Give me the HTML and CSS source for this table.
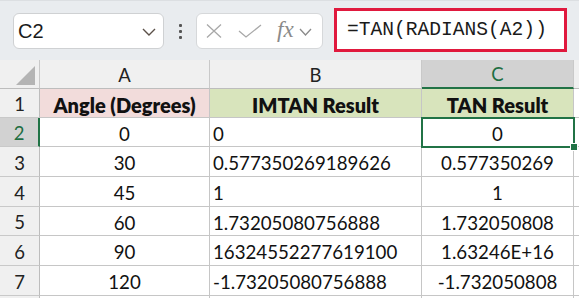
FILE: index.html
```html
<!DOCTYPE html>
<html>
<head>
<meta charset="utf-8">
<link rel="stylesheet" href="styles.css">
</head>
<body>
<div class="app">
  <div class="topbar">
    <div class="namebox">
      <span class="name">C2</span>
      <svg class="chev" width="14" height="8" viewBox="0 0 14 8"><path d="M1 1 L7 7 L13 1" fill="none" stroke="#5b5048" stroke-width="1.4"/></svg>
    </div>
    <div class="dots"><span></span><span></span><span></span></div>
    <div class="fxbox">
      <svg class="ico-x" width="18" height="14" viewBox="0 0 18 14"><path d="M2 0.5 L16 13.5 M16 0.5 L2 13.5" stroke="#a8a8a8" stroke-width="1.3" fill="none"/></svg>
      <svg class="ico-check" width="24" height="14" viewBox="0 0 24 14"><path d="M1 7 L8 13 L23 1" stroke="#a8a8a8" stroke-width="1.3" fill="none"/></svg>
      <span class="fx">fx</span>
      <svg class="chev2" width="13" height="8" viewBox="0 0 13 8"><path d="M1 1 L6.5 7 L12 1" fill="none" stroke="#8a8a8a" stroke-width="1.3"/></svg>
    </div>
    <div class="formula">=TAN(RADIANS(A2))</div>
  </div>
  <div class="sheet">
    <div class="corner"><span class="tri"></span></div>
    <div class="colhead">A</div>
    <div class="colhead">B</div>
    <div class="colhead sel">C</div>
    <div class="colhead rest"></div>

    <div class="rowhead">1</div>
    <div class="cell hdr pink">Angle (Degrees)</div>
    <div class="cell hdr green">IMTAN Result</div>
    <div class="cell hdr green">TAN Result</div>
    <div class="cell rest"></div>

    <div class="rowhead sel">2</div>
    <div class="cell c">0</div>
    <div class="cell l">0</div>
    <div class="cell c active">0<span class="handle"></span></div>
    <div class="cell rest"></div>

    <div class="rowhead">3</div>
    <div class="cell c">30</div>
    <div class="cell l">0.577350269189626</div>
    <div class="cell c">0.577350269</div>
    <div class="cell rest"></div>

    <div class="rowhead">4</div>
    <div class="cell c">45</div>
    <div class="cell l">1</div>
    <div class="cell c">1</div>
    <div class="cell rest"></div>

    <div class="rowhead">5</div>
    <div class="cell c">60</div>
    <div class="cell l">1.73205080756888</div>
    <div class="cell c">1.732050808</div>
    <div class="cell rest"></div>

    <div class="rowhead">6</div>
    <div class="cell c">90</div>
    <div class="cell l">16324552277619100</div>
    <div class="cell c">1.63246E+16</div>
    <div class="cell rest"></div>

    <div class="rowhead">7</div>
    <div class="cell c">120</div>
    <div class="cell l">-1.73205080756888</div>
    <div class="cell c">-1.732050808</div>
    <div class="cell rest"></div>

    <div class="rowhead"></div>
    <div class="cell"></div>
    <div class="cell"></div>
    <div class="cell"></div>
    <div class="cell rest"></div>
  </div>
</div>
</body>
</html>
```
FILE: styles.css
```css
* { box-sizing: border-box; }
html, body { margin: 0; padding: 0; }
body {
  width: 579px;
  height: 298px;
  overflow: hidden;
  background: #ffffff;
  font-family: Lato, "Liberation Sans", sans-serif;
  color: #000;
}
.app { width: 579px; }

.topbar {
  height: 60px;
  background: #e9ecef;
  display: flex;
  align-items: flex-start;
  padding: 7px 0 0 13px;
  border-top: 1px solid #dcdfe2;
}
.namebox {
  margin-top: 5px;
  width: 151px;
  height: 36px;
  background: #fff;
  border: 1px solid #cfd1d3;
  border-radius: 6px;
  display: flex;
  align-items: center;
  justify-content: space-between;
  padding: 0 7px 0 4px;
}
.name {
  font-family: "Liberation Sans", Arial, sans-serif;
  font-size: 20px;
  color: #1a1a1a;
}
.chev { margin-top: 1px; }
.dots {
  width: 32px;
  height: 36px;
  margin-top: 5px;
  display: flex;
  flex-direction: column;
  align-items: center;
  justify-content: center;
  gap: 3px;
}
.dots span {
  width: 3px;
  height: 3px;
  background: #555;
  border-radius: 1px;
}
.fxbox {
  margin-top: 5px;
  width: 127px;
  height: 36px;
  background: #fff;
  border: 1px solid #d6d8da;
  border-radius: 6px;
  display: flex;
  align-items: center;
  padding: 0 0 0 8px;
}
.ico-x { margin-left: 0; }
.ico-check { margin-left: 15px; }
.fx {
  margin-left: 15px;
  font-family: "Liberation Serif", "DejaVu Serif", serif;
  font-style: italic;
  font-size: 23px;
  color: #8a8a8a;
  line-height: 1;
  margin-top: -3px;
}
.chev2 { margin-left: 5px; margin-top: 2px; }
.formula {
  margin-left: 11px;
  width: 233px;
  height: 44px;
  background: #fff;
  border: 3px solid #e0193e;
  font-family: "Liberation Mono", "DejaVu Sans Mono", monospace;
  font-size: 19.6px;
  color: #1a1a1a;
  padding: 0 0 0 10px;
  display: flex;
  align-items: center;
}

.sheet {
  display: grid;
  grid-template-columns: 40px 170px 212px 152px 5px;
  grid-template-rows: 29px 29px 29px 30px 30px 29px 30px 30px 10px;
  font-size: 18.7px;
}
.corner, .colhead {
  background: #f0f0f0;
  border-right: 1px solid #c9c9c9;
  border-bottom: 1px solid #bdbdbd;
}
.corner {
  position: relative;
}
.tri {
  position: absolute;
  left: 16px;
  top: 6px;
  width: 19px;
  height: 19px;
  background: #b4b4b4;
  clip-path: polygon(100% 0, 100% 100%, 0 100%);
}
.colhead {
  display: flex;
  align-items: center;
  justify-content: center;
  font-size: 18.5px;
  color: #222;
  padding-top: 1px;
}
.colhead.sel {
  background: #d2d2d2;
  color: #1e6e42;
  border-bottom: 2px solid #217346;
}
.colhead.rest {
  border-right: none;
  background: #f0f0f0;
}
.rowhead {
  background: #f0f0f0;
  border-right: 1px solid #bdbdbd;
  border-bottom: 1px solid #c9c9c9;
  display: flex;
  align-items: center;
  justify-content: center;
  font-size: 18.5px;
  color: #222;
  padding-top: 2px;
}
.rowhead.sel {
  background: #d2d2d2;
  color: #1e6e42;
  border-right: 2px solid #217346;
}
.cell {
  border-right: 1px solid #c6c6c6;
  border-bottom: 1px solid #c6c6c6;
  display: flex;
  align-items: center;
  white-space: nowrap;
  padding-top: 3px;
  color: #111;
}
.cell.rest { border-right: none; }
.c { justify-content: center; }
.l { justify-content: flex-start; padding-left: 3px; }
.hdr {
  justify-content: center;
  font-weight: 800;
  font-size: 20px;
}
.pink { background: #f2dcdb; }
.green { background: #d8e4bc; }
.active {
  position: relative;
  outline: 2px solid #217346;
  outline-offset: -1px;
  z-index: 2;
}
.handle {
  position: absolute;
  right: -5px;
  bottom: -5px;
  width: 8px;
  height: 8px;
  background: #217346;
  border: 1px solid #fff;
}
```
